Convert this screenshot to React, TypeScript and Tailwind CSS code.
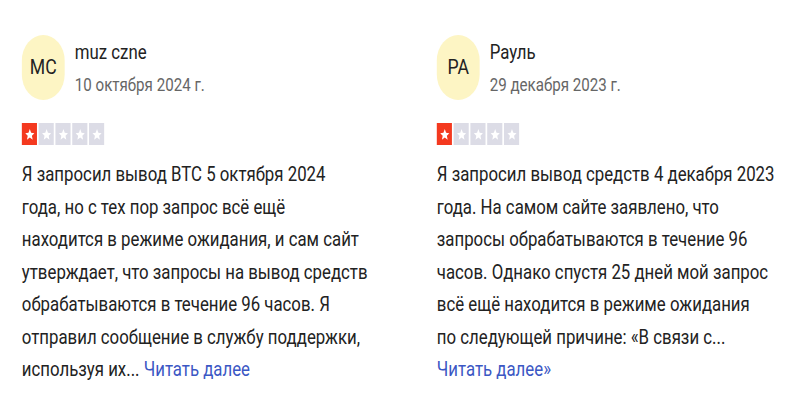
const reviews = [
  {
    initials: 'MC',
    name: 'muz czne',
    date: '10 октября 2024 г.',
    lines: [
      'Я запросил вывод BTC 5 октября 2024',
      'года, но с тех пор запрос всё ещё',
      'находится в режиме ожидания, и сам сайт',
      'утверждает, что запросы на вывод средств',
      'обрабатываются в течение 96 часов. Я',
      'отправил сообщение в службу поддержки,',
      'используя их...',
    ],
    more: 'Читать далее',
    moreInline: true,
  },
  {
    initials: 'PA',
    name: 'Рауль',
    date: '29 декабря 2023 г.',
    lines: [
      'Я запросил вывод средств 4 декабря 2023',
      'года. На самом сайте заявлено, что',
      'запросы обрабатываются в течение 96',
      'часов. Однако спустя 25 дней мой запрос',
      'всё ещё находится в режиме ожидания',
      'по следующей причине: «В связи с...',
    ],
    more: 'Читать далее»',
    moreInline: false,
  },
]

function Star({ active }: { active: boolean }) {
  return (
    <div className={`w-[18px] h-[22px] flex items-center justify-center ${active ? 'bg-[#f4391f]' : 'bg-[#dcdce6]'}`}>
      <svg viewBox="0 0 24 24" className="w-[13px] h-[13px]" fill="#ffffff">
        <path d="M12 2l2.9 6.9 7.1.6-5.4 4.7 1.7 7.3L12 17.6l-6.3 3.9 1.7-7.3L2 9.5l7.1-.6z" />
      </svg>
    </div>
  )
}

export default function App() {
  return (
    <div className="w-[800px] h-[400px] bg-white overflow-hidden">
      {/* the source shot is squeezed horizontally */}
      <div className="w-[952px] origin-top-left scale-x-[0.84] grid grid-cols-[494px_1fr] pl-[26px] pt-[35px] font-['Roboto',sans-serif] text-[#222]">
        {reviews.map((r) => (
          <div key={r.name} className="flex flex-col">
            {/* Header */}
            <div className="flex items-center gap-[12px]">
              <div className="w-[51px] h-[65px] rounded-full bg-[#fdf5c4] flex items-center justify-center text-[21px]">
                {r.initials}
              </div>
              <div className="flex flex-col gap-[8px]">
                <span className="text-[20px] leading-[26px]">{r.name}</span>
                <span className="text-[18px] leading-[24px] text-[#666]">{r.date}</span>
              </div>
            </div>

            {/* Rating */}
            <div className="flex gap-[2px] mt-[23px]">
              {[0, 1, 2, 3, 4].map((s) => (
                <Star key={s} active={s === 0} />
              ))}
            </div>

            {/* Body */}
            <div className="mt-[13px] text-[20px] leading-[32.5px] whitespace-nowrap">
              {r.lines.map((line, i) => (
                <div key={i}>
                  {line}
                  {r.moreInline && i === r.lines.length - 1 && (
                    <span className="text-[#3b57c4]"> {r.more}</span>
                  )}
                </div>
              ))}
              {!r.moreInline && <div className="text-[#3b57c4]">{r.more}</div>}
            </div>
          </div>
        ))}
      </div>
    </div>
  )
}
